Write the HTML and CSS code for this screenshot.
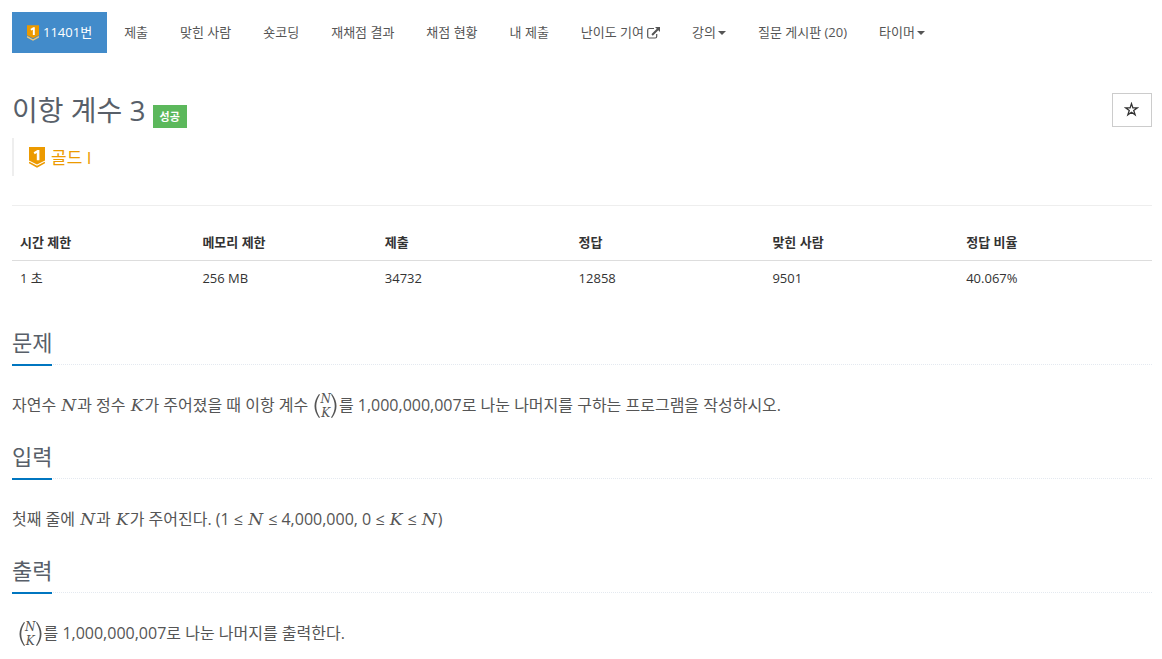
FILE: index.html
```html
<!DOCTYPE html>
<html lang="ko">
<head>
<meta charset="utf-8">
<title>11401번: 이항 계수 3</title>
<meta name="viewport" content="width=device-width, initial-scale=1">
<link rel="stylesheet" href="styles.css">
</head>
<body>
<svg class="defs" width="0" height="0" aria-hidden="true">
  <symbol id="tier" viewBox="0 0 16 21">
    <path fill="#ec9a00" d="M0 0h16v13.5l-8 4-8-4z"/>
    <path fill="none" stroke="#ec9a00" stroke-width="1.6" d="M0 15.4l8 4.4 8-4.4"/>
    <path fill="#fff" d="M4.6 5.2l3.8-2.3h2v10.3H7.8V6L5.7 7.2z"/>
  </symbol>
  <symbol id="tier-pale" viewBox="0 0 16 21">
    <path fill="#ec9a00" d="M0 0h16v13.5l-8 4-8-4z"/>
    <path fill="none" stroke="#f0c878" stroke-width="1.8" d="M0 15.4l8 4.4 8-4.4"/>
    <path fill="#fff" d="M4.6 5.2l3.8-2.3h2v10.3H7.8V6L5.7 7.2z"/>
  </symbol>
</svg>
<main class="container">
  <nav>
    <ul class="menu">
      <li><a class="active" href="#"><svg class="tier-small" role="img" aria-label="골드 I"><use href="#tier-pale"/></svg>11401번</a></li>
      <li><a href="#">제출</a></li>
      <li><a href="#">맞힌 사람</a></li>
      <li><a href="#">숏코딩</a></li>
      <li><a href="#">재채점 결과</a></li>
      <li><a href="#">채점 현황</a></li>
      <li><a href="#">내 제출</a></li>
      <li><a href="#">난이도 기여<svg class="external" viewBox="0 0 13 12" aria-hidden="true"><path d="M7 1.500H2.200Q.7 1.500.7 3v6.500Q.7 11 2.200 11h6Q9.700 11 9.700 9.500V7" fill="none" stroke="currentColor" stroke-width="1.200"/><path d="M8 0h5v5l-1.700-1.700-5.500 5.400-1.400-1.400 5.400-5.500z" fill="currentColor"/></svg></a></li>
      <li><a href="#">강의<span class="caret"></span></a></li>
      <li><a href="#">질문 게시판 (20)</a></li>
      <li><a href="#">타이머<span class="caret"></span></a></li>
    </ul>
  </nav>

  <header class="page-header">
    <div class="heading">
      <div class="title-row">
        <h1>이항 계수 3</h1>
        <span class="label">성공</span>
      </div>
      <blockquote class="tier"><svg class="tier-large" aria-hidden="true"><use href="#tier"/></svg>골드 I</blockquote>
    </div>
    <button class="favorite" type="button" aria-label="즐겨찾기"><svg viewBox="0 0 14 14" aria-hidden="true"><path d="M7 1.500l1.300 4h4.200L9.100 7.900l1.300 4L7 9.500l-3.400 2.400 1.300-4L1.500 5.500h4.200z" fill="none" stroke="currentColor" stroke-width="1.200"/></svg></button>
  </header>

  <table class="info">
    <thead>
      <tr><th class="limit">시간 제한</th><th class="limit">메모리 제한</th><th>제출</th><th>정답</th><th>맞힌 사람</th><th>정답 비율</th></tr>
    </thead>
    <tbody>
      <tr><td>1 초</td><td>256 MB</td><td>34732</td><td>12858</td><td>9501</td><td>40.067%</td></tr>
    </tbody>
  </table>

  <section>
    <div class="headline"><h2>문제</h2></div>
    <p>자연수 <i class="math">N</i>과 정수 <i class="math">K</i>가 주어졌을 때 이항 계수 <span class="binom"><svg class="paren" viewBox="0 0 7 24"><path d="M6 0Q-3 12 6 24l1-.5Q-.5 12 7 .5z"/></svg><span class="stack"><i>N</i><i>K</i></span><svg class="paren" viewBox="0 0 7 24"><path d="M1 0Q10 12 1 24l-1-.5Q7.500 12 0 .5z"/></svg></span>를 1,000,000,007로 나눈 나머지를 구하는 프로그램을 작성하시오.</p>
  </section>

  <section>
    <div class="headline"><h2>입력</h2></div>
    <p>첫째 줄에 <i class="math">N</i>과 <i class="math">K</i>가 주어진다. (1 ≤ <i class="math">N</i> ≤ 4,000,000, 0 ≤ <i class="math">K</i> ≤ <i class="math">N</i>)</p>
  </section>

  <section>
    <div class="headline"><h2>출력</h2></div>
    <p><span class="binom first"><svg class="paren" viewBox="0 0 7 24"><path d="M6 0Q-3 12 6 24l1-.5Q-.5 12 7 .5z"/></svg><span class="stack"><i>N</i><i>K</i></span><svg class="paren" viewBox="0 0 7 24"><path d="M1 0Q10 12 1 24l-1-.5Q7.500 12 0 .5z"/></svg></span>를 1,000,000,007로 나눈 나머지를 출력한다.</p>
  </section>
</main>
</body>
</html>
```
FILE: styles.css
```css
* { box-sizing: border-box; }

body {
  margin: 0;
  background: #fff;
  color: #333;
  font: 13px/21px "Open Sans", "Noto Sans CJK KR", sans-serif;
}

.defs { position: absolute; }

.container { padding: 12px 10px 0 12px; }

.menu {
  display: flex;
  flex-wrap: wrap;
  gap: 2px;
  margin: 0;
  padding: 0;
  list-style: none;
}

.menu a {
  display: flex;
  align-items: center;
  padding: 10px 15px;
  color: #555;
  text-decoration: none;
  white-space: nowrap;
}

.menu .active { background: #428bca; color: #fff; }

.tier-small { width: 12px; height: 16px; margin-right: 4px; }

.external { width: 13px; height: 12px; margin-left: 3px; }

.caret {
  margin-left: 2px;
  border-top: 4px solid;
  border-right: 4px solid transparent;
  border-left: 4px solid transparent;
}

.page-header {
  display: flex;
  justify-content: space-between;
  align-items: flex-start;
  margin-top: 40px;
  padding-bottom: 29px;
  border-bottom: 1px solid #eee;
}

.title-row { display: flex; align-items: flex-end; gap: 7px; }

h1, h2 { margin: 0; color: #585f69; font-weight: 400; }

h1 { font-size: 28px; line-height: 35px; }

.label {
  padding: 0 7px;
  background: #5cb85c;
  color: #fff;
  font-size: 11px;
  font-weight: 700;
  line-height: 23px;
}

.tier {
  display: flex;
  align-items: center;
  height: 38px;
  margin: 10px 0 0;
  padding-left: 15px;
  border-left: 2px solid #eee;
  color: #ec9a00;
  font-size: 17px;
}

.tier-large { width: 16px; height: 21px; margin-right: 6px; }

.favorite {
  display: flex;
  align-items: center;
  justify-content: center;
  width: 40px;
  height: 34px;
  padding: 0 1px 2px 0;
  border: 1px solid #ccc;
  background: #fff;
  color: #333;
}

.favorite svg { width: 15px; height: 15px; }

.info {
  width: 100%;
  margin: 19px 0 30px;
  border-collapse: collapse;
  table-layout: fixed;
}

.info th, .info td { padding: 7px 8px; text-align: left; }

.info th { border-bottom: 1px solid #ddd; }

.info .limit { width: 16%; }

.headline {
  display: flex;
  border-bottom: 1px dotted #e4e9f0;
}

h2 {
  margin-bottom: -2px;
  padding-bottom: 5px;
  border-bottom: 2px solid #0076c0;
  font-size: 22px;
  line-height: 33px;
}

section p {
  margin: 26px 0 21px;
  color: #555;
  font-size: 16px;
  line-height: 28px;
}

.math, .stack {
  font-family: "DejaVu Serif", serif;
  font-style: italic;
}

.math { margin: 0 1px; font-size: 17px; line-height: 1; }

.binom {
  display: inline-flex;
  align-items: center;
  margin: -4px 1px -2px;
  vertical-align: middle;
}

.first { margin-left: 6px; }

.paren { width: 7px; height: 24px; fill: currentColor; }

.stack {
  display: grid;
  justify-items: center;
  font-size: 12px;
  line-height: 14px;
}
```
